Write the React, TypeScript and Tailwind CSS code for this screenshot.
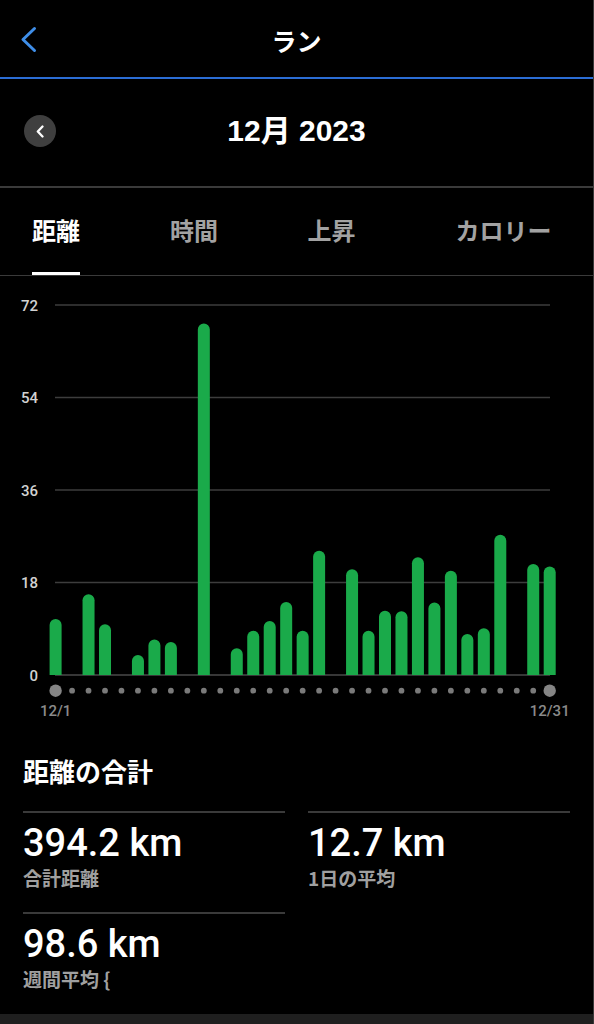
import React from "react";

const bars: Record<number, number> = {
  1: 10.9, 3: 15.7, 4: 9.9, 6: 3.9, 7: 6.9, 8: 6.4, 10: 68.4, 12: 5.2, 13: 8.6,
  14: 10.5, 15: 14.2, 16: 8.6, 17: 24.2, 19: 20.6, 20: 8.6, 21: 12.5, 22: 12.4,
  23: 22.9, 24: 14.1, 25: 20.3, 26: 8.0, 27: 9.1, 28: 27.3, 30: 21.6, 31: 21.1,
};

const BASE = 399;
const UNIT = (399 - 29) / 72;
const xOf = (d: number) => 55.6 + (d - 1) * 16.47;

function Chart() {
  const grid = [72, 54, 36, 18, 0];
  return (
    <svg width="593" height="458" viewBox="0 0 593 458" className="block">
      {grid.map((v) => {
        const y = BASE - v * UNIT;
        return (
          <g key={v}>
            <line x1={55} x2={550} y1={y} y2={y} stroke={v === 0 ? "#4a4a4a" : "#3d3d3d"} strokeWidth={1.3} />
            <text x={38} y={y + 0.5} textAnchor="end" dominantBaseline="central" fill="#d2d2d2" fontSize={15} fontWeight={500} fontFamily="Roboto, Liberation Sans, Arial, sans-serif">
              {v}
            </text>
          </g>
        );
      })}
      {Object.entries(bars).map(([d, v]) => {
        const x = xOf(Number(d));
        const top = BASE - v * UNIT;
        const r = 6;
        return (
          <path
            key={d}
            d={`M${x - r},${BASE} V${top + r} A${r},${r} 0 0 1 ${x + r},${top + r} V${BASE} Z`}
            fill="#1aaa4a"
          />
        );
      })}
      {Array.from({ length: 31 }, (_, i) => i + 1).map((d) => (
        <circle
          key={d}
          cx={xOf(d)}
          cy={414.7}
          r={d === 1 || d === 31 ? 6.2 : 2.9}
          fill={d === 1 || d === 31 ? "#858585" : "#7a7a7a"}
        />
      ))}
      <text x={xOf(1)} y={435} textAnchor="middle" dominantBaseline="central" fill="#8a8a8a" fontSize={15} fontWeight={500} fontFamily="Roboto, Liberation Sans, Arial, sans-serif">
        12/1
      </text>
      <text x={xOf(31)} y={435} textAnchor="middle" dominantBaseline="central" fill="#8a8a8a" fontSize={15} fontWeight={500} fontFamily="Roboto, Liberation Sans, Arial, sans-serif">
        12/31
      </text>
    </svg>
  );
}

function Stat({ value, label }: { value: string; label: string }) {
  return (
    <div className="flex flex-col h-[101px]">
      <div className="h-[1.5px] bg-[#3a3a3a]" />
      <div className="pt-[11.5px] text-[38px] leading-[38px] text-white font-medium font-['Roboto','Liberation_Sans',Arial,sans-serif]">
        {value}
      </div>
      <div className="mt-[5.5px] text-[19px] leading-[19px] text-[#a0a0a0] font-bold font-['Noto_Sans_CJK_JP',sans-serif]">
        {label}
      </div>
    </div>
  );
}

export default function App() {
  const tabs = [
    { t: "距離", w: "w-[138px]", active: true },
    { t: "時間", w: "w-[137.5px]", active: false },
    { t: "上昇", w: "w-[148px]", active: false },
    { t: "カロリー", w: "w-auto", active: false },
  ];
  return (
    <div className="w-[594px] h-[1024px] bg-black flex flex-col border-r border-[#3a3a3a] overflow-hidden font-['Noto_Sans_CJK_JP',sans-serif]">
      {/* Header */}
      <div className="h-[77px] grid grid-cols-[1fr_auto_1fr] items-center">
        <div className="pl-[19px] pt-[1px]">
          <svg width="19" height="27" viewBox="0 0 19 27">
            <path d="M15.5 2.5 L4 13.5 L15.5 24.5" fill="none" stroke="#3f8ee8" strokeWidth="3" strokeLinecap="round" strokeLinejoin="round" />
          </svg>
        </div>
        <div className="text-white text-[25px] font-bold leading-none pt-[4px]">ラン</div>
        <div />
      </div>
      <div className="h-[2px] bg-[#2b6dd5]" />

      {/* Month row */}
      <div className="h-[107px] grid grid-cols-[1fr_auto_1fr] items-center pb-[3px]">
        <div className="pl-[24px]">
          <div className="w-[32px] h-[32px] rounded-full bg-[#3f3f3f] flex items-center justify-center">
            <svg width="10" height="13" viewBox="0 0 10 13">
              <path d="M7.5 1.5 L2.8 6.5 L7.5 11.5" fill="none" stroke="#ffffff" strokeWidth="2.3" strokeLinecap="round" strokeLinejoin="round" />
            </svg>
          </div>
        </div>
        <div className="text-white text-[30px] font-bold leading-none font-['Liberation_Sans','Noto_Sans_CJK_JP',sans-serif]">
          12月 2023
        </div>
        <div />
      </div>
      <div className="h-[1.5px] bg-[#3a3a3a]" />

      {/* Tabs */}
      <div className="h-[87px] flex pl-[32px]">
        {tabs.map((tab) => (
          <div key={tab.t} className={`${tab.w} shrink-0 h-full`}>
            <div className="w-fit h-full flex flex-col">
              <div
                className={`flex-1 flex items-center text-[24px] leading-none font-bold ${
                  tab.active ? "text-white" : "text-[#a2a2a2]"
                }`}
              >
                {tab.t}
              </div>
              <div className={`h-[2.5px] ${tab.active ? "bg-white" : "bg-transparent"}`} />
            </div>
          </div>
        ))}
      </div>
      <div className="h-[1.5px] bg-[#3a3a3a]" />

      {/* Chart */}
      <Chart />

      {/* Stats */}
      <div className="flex-1 px-[23px]">
        <div className="pt-[24px] text-white text-[26px] leading-[26px] font-bold">距離の合計</div>
        <div className="mt-[27px] grid grid-cols-2 gap-x-[23px]">
          <Stat value="394.2 km" label="合計距離" />
          <Stat value="12.7 km" label="1日の平均" />
          <Stat value="98.6 km" label="週間平均 {" />
        </div>
      </div>
      <div className="h-[10px] bg-[#1f1f1f]" />
    </div>
  );
}
